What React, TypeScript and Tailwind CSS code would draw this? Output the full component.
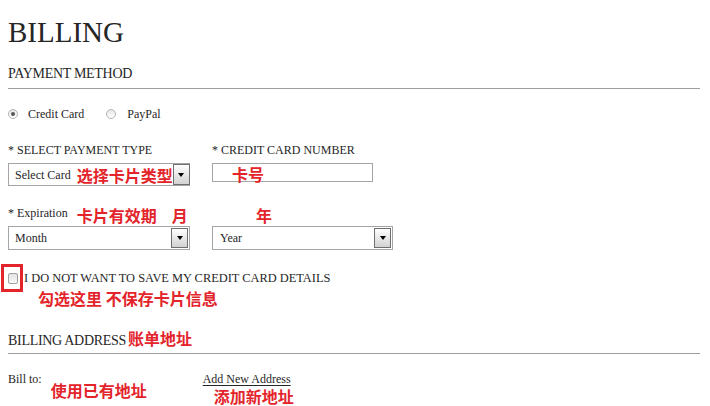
import React from "react";

const serif = "font-['Liberation_Serif','Times_New_Roman',serif]";
const note =
  "font-['Noto_Sans_CJK_SC','Noto_Sans_CJK_JP',sans-serif] font-bold text-[16px] leading-4 text-[#e3242b] whitespace-pre";

function Radio({ checked }: { checked?: boolean }) {
  return (
    <span className="flex h-[10px] w-[10px] items-center justify-center rounded-full border border-[#b4b4b4] bg-gradient-to-b from-[#e6e6e6] to-white">
      {checked && <span className="h-[4px] w-[4px] rounded-full bg-[#555]" />}
    </span>
  );
}

function Arrow({ h }: { h: string }) {
  return (
    <span
      className={`ml-auto mr-[1px] flex w-[17px] shrink-0 items-center justify-center border border-[#6f6f6f] bg-gradient-to-b from-white to-[#d2d2d2] ${h}`}
    >
      <span className="h-0 w-0 border-l-[3.5px] border-r-[3.5px] border-t-[4px] border-l-transparent border-r-transparent border-t-black" />
    </span>
  );
}

export default function App() {
  return (
    <div className={`h-screen overflow-hidden bg-white pl-2 pr-[10px] text-[#262626] ${serif}`}>
      {/* Title */}
      <h1 className="pt-4 text-[29px] font-normal leading-8">BILLING</h1>

      {/* Payment method */}
      <div className="mt-[18px] border-b border-[#9d9d9d] pb-[6px]">
        <h2 className="text-[14px] leading-4 tracking-[-0.3px]">PAYMENT METHOD</h2>
      </div>

      <div className="mt-[15px] flex h-5 items-center text-[12px] leading-[14px]">
        <Radio checked />
        <span className="ml-[10px]">Credit Card</span>
        <span className="ml-[22px]">
          <Radio />
        </span>
        <span className="ml-[11px]">PayPal</span>
      </div>

      {/* Card type + number */}
      <div className="mt-[19px] flex text-[12px] leading-[14px]">
        <div className="w-[182px]">
          <div className="whitespace-nowrap">* SELECT PAYMENT TYPE</div>
          <div className="mt-[6px] flex h-[23px] items-center border border-[#a5a5a5]">
            <span className="ml-[6px] shrink-0 whitespace-nowrap">Select Card</span>
            <span className={`ml-[6px] shrink-0 pt-px ${note}`}>选择卡片类型</span>
            <Arrow h="h-[21px]" />
          </div>
        </div>
        <div className="ml-[22px]">
          <div className="whitespace-nowrap">* CREDIT CARD NUMBER</div>
          <div className="mt-[6px] flex h-[19px] w-[161px] items-start border border-[#a5a5a5] pl-[19px] pt-[2px]">
            <span className={note}>卡号</span>
          </div>
        </div>
      </div>

      {/* Expiration */}
      <div className="mt-[20px] flex text-[12px] leading-[14px]">
        <div className="w-[182px]">
          <div className="flex h-4 items-start">
            <span>* Expiration</span>
            <span className={`ml-[9px] mt-px ${note}`}>卡片有效期</span>
            <span className={`ml-[15px] mt-px ${note}`}>月</span>
          </div>
          <div className="mt-[4px] flex h-[24px] items-center border border-[#a5a5a5]">
            <span className="ml-[6px]">Month</span>
            <Arrow h="h-[20px]" />
          </div>
        </div>
        <div className="ml-[22px] w-[181px]">
          <div className="flex h-4 items-start pl-[44px]">
            <span className={`mt-px ${note}`}>年</span>
          </div>
          <div className="mt-[4px] flex h-[24px] items-center border border-[#a5a5a5]">
            <span className="ml-[7px]">Year</span>
            <Arrow h="h-[20px]" />
          </div>
        </div>
      </div>

      {/* Save card checkbox */}
      <div className="relative mt-[21px] flex h-[14px] items-center text-[12.4px] leading-[14px]">
        <span className="h-[11px] w-[10px] rounded-[2px] border border-[#a0a0a0] bg-gradient-to-b from-[#e4e4e4] to-[#f7f7f7]" />
        <span className="pointer-events-none absolute left-[-7px] top-[-7px] h-[28px] w-[22px] border-[3px] border-[#e3242b]" />
        <span className="ml-[6px] whitespace-nowrap">I DO NOT WANT TO SAVE MY CREDIT CARD DETAILS</span>
      </div>
      <div className={`ml-[30px] mt-[5px] ${note}`}>勾选这里 不保存卡片信息</div>

      {/* Billing address */}
      <div className="mt-[24px] flex items-start border-b border-[#9d9d9d] pb-[4px]">
        <h2 className="mt-[3px] text-[14px] leading-4 tracking-[-0.3px]">BILLING ADDRESS</h2>
        <span className={`ml-[2px] ${note}`}>账单地址</span>
      </div>

      <div className="mt-[18px] flex items-start text-[12px] leading-[14px]">
        <span>Bill to:</span>
        <span className={`ml-[9px] mt-[10px] ${note}`}>使用已有地址</span>
        <div className="ml-[56px] flex flex-col">
          <a href="#" className="underline underline-offset-[2px]">
            Add New Address
          </a>
          <span className={`ml-[11px] mt-[2px] ${note}`}>添加新地址</span>
        </div>
      </div>
    </div>
  );
}
